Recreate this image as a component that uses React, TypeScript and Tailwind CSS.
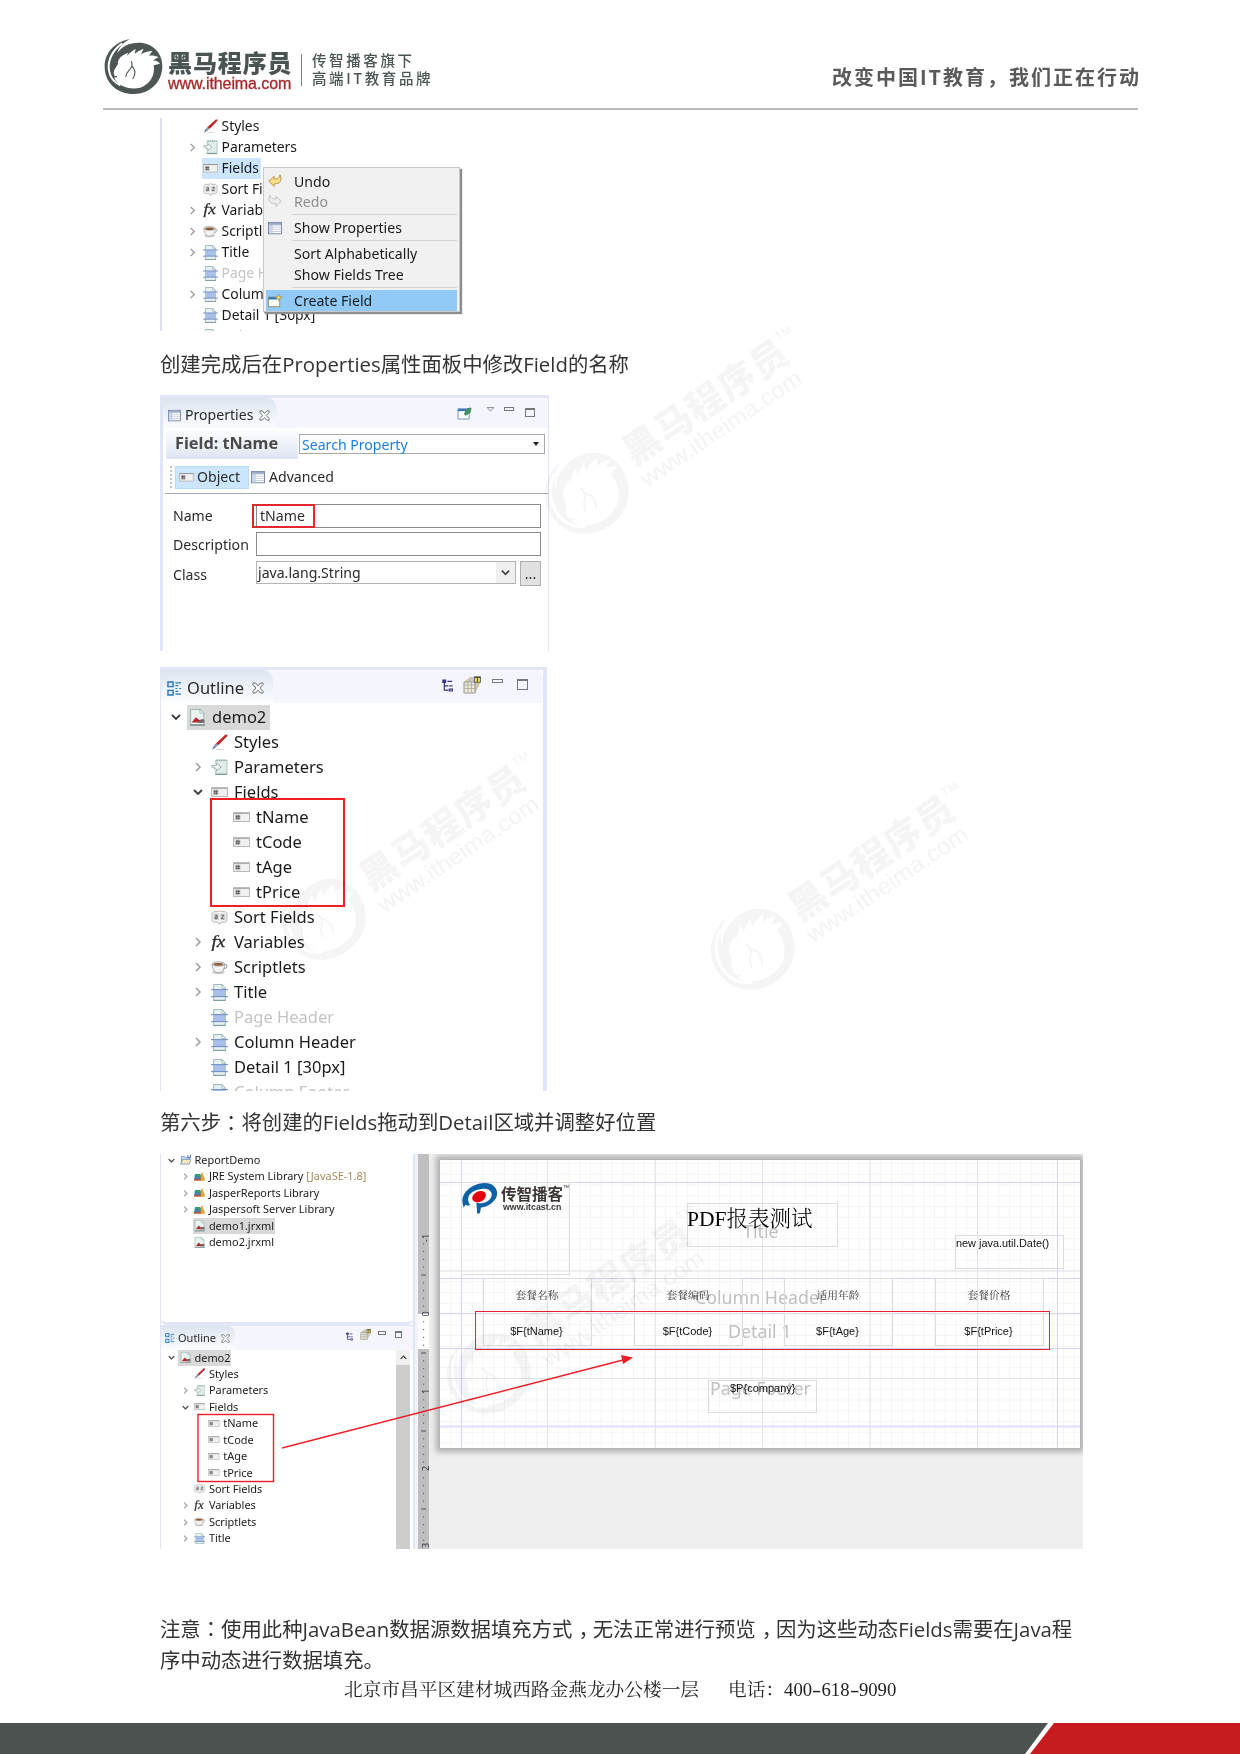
import React from "react";

type IconName =
  | "brush" | "param" | "field" | "sort" | "fx" | "cup" | "band" | "report"
  | "lib" | "folder" | "undo" | "redo" | "table" | "create" | "none";

function Icon({ name, className }: { name: IconName; className: string }) {
  const body: Record<IconName, React.ReactNode> = {
    none: null,
    brush: (
      <>
        <path d="M1 15l2-4.5 2 1.5z" fill="#5b6cae" />
        <path d="M2.4 11.4L5 8.2l2.2 1.8-3.100 3z" fill="#8f97b5" />
        <path d="M4.800 8.600L13.600.400l1.900.2-.3 1.400L7.200 10.400z" fill="#c0282c" />
        <path d="M5 14.500h7" stroke="#d8d8e2" />
      </>
    ),
    param: (
      <>
        <path d="M4.500 1h10.500v13.500H4.500v-4M4.500 5V1" fill="#dfecea" stroke="#a9c2be" strokeWidth=".9" />
        <path d="M5 1.200h9.500" stroke="#6f9b98" strokeDasharray="1.200 1" />
        <path d="M.8 6h4.500V4l4.200 3.600-4.200 3.400V9.400H3.400V7.800H.8z" fill="#f6faf8" stroke="#8fa8a4" strokeWidth=".8" />
        <path d="M4 14.400h11" stroke="#7d9c98" strokeWidth="1.200" />
      </>
    ),
    field: (
      <>
        <rect x=".5" y="3.800" width="15" height="8" fill="#f1f1f1" stroke="#b5b5b5" strokeWidth=".9" />
        <path d="M.5 3.800h15" stroke="#8f8f8f" strokeWidth=".9" />
        <rect x="1.500" y="4.800" width="5.800" height="6" fill="#e2e2e2" />
        <path d="M3.600 5.500v4.600M5.400 5.500v4.600M2.300 6.900h4.400M2.300 8.700h4.400" stroke="#4a4a4a" strokeWidth=".75" />
      </>
    ),
    sort: (
      <>
        <path d="M2.500 2.500h4.200L8 1.400l1.300 1.100h4.200L15 4v7.200l-1.500 1.200h-4L8 14.600l-1.500-2.200h-4L1 11.200V4z" fill="#f2f2f2" stroke="#b4b4b4" strokeWidth=".9" />
        <rect x="2.600" y="4.500" width="4.800" height="5.800" fill="#d4d4d4" />
        <rect x="8.600" y="4.500" width="4.800" height="5.800" fill="#d4d4d4" />
        <path d="M3.800 5.800h2v3.400h-2V7.500h2M9.800 5.800h2.400l-2.400 3.400h2.600" fill="none" stroke="#555" strokeWidth=".8" />
      </>
    ),
    fx: (
      <text x=".5" y="12.200" fontFamily="Liberation Serif, serif" fontStyle="italic" fontSize="16.500" fill="#2b2b2b" stroke="#2b2b2b" strokeWidth=".3" textLength="13" lengthAdjust="spacingAndGlyphs">fx</text>
    ),
    cup: (
      <>
        <ellipse cx="7" cy="12.600" rx="6" ry="1.700" fill="#d0d0d0" />
        <path d="M1 4.500C1 9 3 13 7 13s6-4 6-8.500z" fill="#f3f3f3" stroke="#9c9c9c" strokeWidth=".8" />
        <path d="M12.800 5.500c3-.8 3.400 2.600-1 4" fill="none" stroke="#a5a5a5" />
        <ellipse cx="7" cy="4.700" rx="6" ry="2" fill="#efe9e4" stroke="#a0a0a0" strokeWidth=".8" />
        <ellipse cx="7" cy="5" rx="4.600" ry="1.300" fill="#8a5a35" />
      </>
    ),
    band: (
      <>
        <path d="M2.500.5h8L13.500 4v11.500h-11z" fill="#e6f1f0" stroke="#9ab5b8" strokeWidth=".9" />
        <path d="M10.300.5V4h3.200z" fill="#fff" stroke="#9ab5b8" strokeWidth=".8" />
        <rect x="2.800" y="5.500" width="10.400" height="6.300" fill="#a9c0ec" />
        <path d="M0 5.300h16M0 11.900h16" stroke="#6683bd" strokeWidth=".9" />
        <path d="M2.200 15.400h11.600" stroke="#7f9a9c" />
      </>
    ),
    report: (
      <>
        <path d="M1.500.5h9L14 4v11.500H1.500z" fill="#e9f4f1" stroke="#9bb3b0" strokeWidth=".9" />
        <path d="M10.300.5V4H14z" fill="#fff" stroke="#9bb3b0" strokeWidth=".8" />
        <path d="M2.500 12.800l4-5 3 2.600 2.500-.6 1.500 3z" fill="#b7282b" />
        <path d="M8 13h6.500V10l-2-.6-2 1.300z" fill="#6a6a6a" />
        <path d="M1 15h14" stroke="#7d8f90" strokeWidth="1.400" />
      </>
    ),
    lib: (
      <>
        <path d="M1.500 4h7l1.500 2.500H1z" fill="#2e9e78" />
        <rect x="1" y="6" width="9" height="2.400" fill="#2e8f80" />
        <rect x=".5" y="8.600" width="9.500" height="2.400" fill="#2a6fa8" />
        <rect x="0" y="11.200" width="10.500" height="2.400" fill="#c2542e" />
        <path d="M9.500 13.600V3.500l2-1.500L16 13.600z" fill="#e8a23a" />
      </>
    ),
    folder: (
      <>
        <path d="M2 14V3.500h4.500l1 1.500H13v3" fill="#cfe0f3" stroke="#5d87b8" />
        <path d="M.8 14L3.600 7.500h12L12.800 14z" fill="#f6e7bd" stroke="#5d87b8" />
        <path d="M11 1.500v3.600h3.500V1" fill="none" stroke="#3f6fae" strokeWidth="1.300" />
      </>
    ),
    undo: (
      <path d="M.8 8.200L7 2.800v3c3.600.3 5.800-1 6.800-4.800 2.700 6 .2 10.500-6.800 10.200v3z" fill="#fbe08c" stroke="#b58a3c" strokeWidth="1" />
    ),
    redo: (
      <path d="M15.200 8.200L9 2.800v3C5.400 6.100 3.200 4.800 2.200 1-.5 7 2 11.500 9 11.200v3z" fill="#ececec" stroke="#c0c0c0" strokeWidth="1" />
    ),
    table: (
      <>
        <rect x=".6" y="1.600" width="14.800" height="13" fill="#fff" stroke="#667a9c" strokeWidth="1" />
        <rect x="1" y="2" width="14" height="2.400" fill="#9aabc8" />
        <rect x="1.100" y="4.500" width="3.400" height="9.600" fill="#c9d6ec" />
        <path d="M4.800 4.500v10M5 7h10M5 9.500h10M5 12h10M1 4.600h14" stroke="#a9b5ca" strokeWidth=".7" />
      </>
    ),
    create: (
      <>
        <rect x=".6" y="3.500" width="12.800" height="11" fill="#fdfdf5" stroke="#a08c5a" strokeWidth="1" />
        <rect x=".6" y="3.500" width="10" height="2.800" fill="#3a78c4" />
        <path d="M12.200.2l1.100 2.600L16 4l-2.700 1.200-1.100 2.600-1.100-2.600L8.400 4l2.700-1.200z" fill="#f7d864" stroke="#a98520" strokeWidth=".7" />
      </>
    ),
  };
  return (
    <svg viewBox="0 0 16 16" className={`shrink-0 ${className}`}>
      {body[name]}
    </svg>
  );
}

/** Horse-head ring mark. */
function HorseMark({ color }: { color: string }) {
  return (
    <g>
      <path d="M120 27C75 36 45 68 45 110c0 48 38 82 87 82s86-36 86-84c0-42-32-70-70-70-30 0-52 12-66 32 6-18 18-32 38-43z" fill={color} />
      <path d="M74 134C66 124 82 112 84 100C86 86 94 76 116 68L111 79C120 68 126 64 138 57L135 72C144 64 150 61 162 56L154 73C164 66 174 64 188 63L178 77C188 75 196 77 207 81L190 91C200 92 206 95 211 101L192 106C197 132 184 162 152 173C120 181 84 168 74 144z" fill="#fff" />
      <path d="M98 40C68 60 53 92 58 122c3 18 15 35 34 44" fill="none" stroke="#fff" strokeWidth="6" />
      <path d="M84 100C74 112 64 128 71 140l11 0M125 94c5 12 1 20-7 27-6 6-9 12-10 20M126 108c11 8 14 24 3 39" fill="none" stroke={color} strokeWidth="3.500" />
    </g>
  );
}

function Watermark({ place }: { place: string }) {
  return (
    <svg viewBox="-50 -50 330 110" className={`pointer-events-none absolute h-[110px] w-[330px] origin-[50px_50px] rotate-[-34deg] overflow-visible mix-blend-multiply ${place}`}>
      <g transform="translate(1.500 1.500) scale(.49) translate(-132 -110)">
        <HorseMark color="#f5f5f5" />
      </g>
      <text x="55" y="6" fontFamily="Noto Sans CJK SC, sans-serif" fontWeight="900" fontSize="37" fill="#f5f5f5" textLength="190">黑马程序员</text>
      <text x="54" y="31" fontFamily="Liberation Sans, sans-serif" fontSize="23" fill="#f4f4f4" textLength="189" lengthAdjust="spacingAndGlyphs">www.itheima.com</text>
      <text x="245" y="-17" fontFamily="Liberation Sans, sans-serif" fontSize="12" fill="#f4f4f4">TM</text>
    </svg>
  );
}

const sizes = {
  sm: {
    row: "h-[16.45px] text-[10.950px]", slot: "w-[11px] mr-[3px]", chev: "size-[7px]", icon: "size-[11.500px]", label: "pl-[3.500px]",
    ind: ["pl-[4.500px]", "pl-[18.900px]", "pl-[33.300px]"],
  },
  md: {
    row: "h-[21px] text-[13.900px]", slot: "w-[14px] mr-[3.500px]", chev: "size-[9px]", icon: "size-[15px]", label: "pl-[4px] pr-[2px]",
    ind: ["pl-0", "pl-[23px]", "pl-[40px]"],
  },
  lg: {
    row: "h-[25px] text-[16.500px]", slot: "w-[16px] mr-[5px]", chev: "size-[10px]", icon: "size-[17px]", label: "pl-[6px] pr-[4px]",
    ind: ["pl-[7px]", "pl-[29px]", "pl-[51px]"],
  },
};

type Node = { t: string; i: IconName; l: number; c?: "r" | "d"; muted?: boolean; sel?: string; note?: string };

function Chevron({ dir, className }: { dir: "r" | "d"; className: string }) {
  return (
    <svg viewBox="0 0 10 10" className={className} fill="none" strokeWidth="1.600">
      {dir === "r" ? <path d="M3 1l4 4-4 4" stroke="#a0a0a0" /> : <path d="M1 3l4 4 4-4" stroke="#404040" strokeWidth="1.900" />}
    </svg>
  );
}

function Tree({ nodes, size }: { nodes: Node[]; size: "sm" | "md" | "lg" }) {
  const s = sizes[size];
  return (
    <div className="flex flex-col whitespace-nowrap font-['Noto_Sans'] text-[#1a1a1a]">
      {nodes.map((n) => (
        <div key={n.t} className={`flex shrink-0 items-center ${s.row} ${s.ind[n.l]}`}>
          <div className={`flex shrink-0 justify-center ${s.slot}`}>{n.c && <Chevron dir={n.c} className={s.chev} />}</div>
          <div className={`flex h-full items-center ${n.sel ?? ""}`}>
            <Icon name={n.i} className={s.icon} />
            <span className={`${s.label} ${n.muted ? "text-[#c4c4c4]" : ""}`}>
              {n.t}
              {n.note && <span className="text-[#a08c5c]"> {n.note}</span>}
            </span>
          </div>
        </div>
      ))}
    </div>
  );
}

const menuTree: Node[] = [
  { t: "Styles", i: "brush", l: 1 },
  { t: "Parameters", i: "param", l: 1, c: "r" },
  { t: "Fields", i: "field", l: 1, sel: "bg-[#cce6ff] shadow-[-1px_0_#cce6ff]" },
  { t: "Sort Fields", i: "sort", l: 1 },
  { t: "Variables", i: "fx", l: 1, c: "r" },
  { t: "Scriptlets", i: "cup", l: 1, c: "r" },
  { t: "Title", i: "band", l: 1, c: "r" },
  { t: "Page Header", i: "band", l: 1, muted: true },
  { t: "Column Header", i: "band", l: 1, c: "r" },
  { t: "Detail 1 [30px]", i: "band", l: 1 },
  { t: "Column Footer", i: "band", l: 1, muted: true },
];

const outline: Node[] = [
  { t: "demo2", i: "report", l: 0, c: "d", sel: "bg-[#d9d9d9] shadow-[-2px_0_#d9d9d9]" },
  { t: "Styles", i: "brush", l: 1 },
  { t: "Parameters", i: "param", l: 1, c: "r" },
  { t: "Fields", i: "field", l: 1, c: "d" },
  { t: "tName", i: "field", l: 2 },
  { t: "tCode", i: "field", l: 2 },
  { t: "tAge", i: "field", l: 2 },
  { t: "tPrice", i: "field", l: 2 },
  { t: "Sort Fields", i: "sort", l: 1 },
  { t: "Variables", i: "fx", l: 1, c: "r" },
  { t: "Scriptlets", i: "cup", l: 1, c: "r" },
  { t: "Title", i: "band", l: 1, c: "r" },
  { t: "Page Header", i: "band", l: 1, muted: true },
  { t: "Column Header", i: "band", l: 1, c: "r" },
  { t: "Detail 1 [30px]", i: "band", l: 1 },
  { t: "Column Footer", i: "band", l: 1, muted: true },
];

const project: Node[] = [
  { t: "ReportDemo", i: "folder", l: 0, c: "d" },
  { t: "JRE System Library", i: "lib", l: 1, c: "r", note: "[JavaSE-1.8]" },
  { t: "JasperReports Library", i: "lib", l: 1, c: "r" },
  { t: "Jaspersoft Server Library", i: "lib", l: 1, c: "r" },
  { t: "demo1.jrxml", i: "report", l: 1, sel: "bg-[#d9d9d9] shadow-[-1px_0_#d9d9d9] pr-px" },
  { t: "demo2.jrxml", i: "report", l: 1 },
];

function CloseX({ className }: { className: string }) {
  return (
    <svg viewBox="0 0 12 12" className={className} fill="#fff" stroke="#666" strokeWidth="1">
      <path d="M1 1h2.500L6 3.800 8.500 1H11v1.600L8 6l3 3.400V11H8.500L6 8.200 3.500 11H1V9.400L4 6 1 2.600z" />
    </svg>
  );
}

function OutlineGlyph({ className }: { className: string }) {
  return (
    <svg viewBox="0 0 16 16" className={className} fill="none" stroke="#2f74b5" strokeWidth="1.500">
      <path d="M1 1h5.500v5H1zM1 10h5.500v5H1z" fill="#d4ebfa" />
      <path d="M9 2h6M9 5h3M9 8h2M13 8h2M9 11h3M9 14h6" strokeWidth="1.300" />
    </svg>
  );
}

function TreeGlyph({ className }: { className: string }) {
  return (
    <svg viewBox="0 0 12 14" className={className} fill="none" stroke="#35357a" strokeWidth="1.300">
      <path d="M2.500 3.500V12H7M2.500 7.500H7" />
      <path d="M1 1h3v2.500H1z" fill="#35357a" />
      <path d="M6 2.500h5M8 7.500h3.500M8 11h3.500v2H8z" />
    </svg>
  );
}

function PreviewGlyph({ className }: { className: string }) {
  return (
    <svg viewBox="0 0 18 18" className={className}>
      <path d="M1 6l6-5h10v7l-5 9z" fill="#c9c7b4" />
      <path d="M1 6h11v11H1z" fill="#eceadb" stroke="#98978a" />
      <path d="M1 9h11M1 12.500h11M5 6v11M8.500 6v11" stroke="#aaa99b" strokeWidth=".8" />
      <rect x="11.500" y=".8" width="6" height="5.500" fill="#f1d54a" stroke="#555" strokeWidth=".8" />
      <path d="M11.500 1.400h6M14.500 1v5" stroke="#444" />
    </svg>
  );
}

function MenuItem({ icon, text, cls }: { icon: IconName; text: string; cls?: string }) {
  return (
    <div className={`flex h-[20.300px] items-center ${cls ?? ""}`}>
      <div className="flex w-[28px] pl-[2px]"><Icon name={icon} className="size-[14px]" /></div>
      <span>{text}</span>
    </div>
  );
}

function ContextShot() {
  return (
    <div className="relative h-[213px] w-[330px] overflow-hidden border-l-2 border-[#dcdff0]">
      <div className="-mt-[2.500px]"><Tree nodes={menuTree} size="md" /></div>
      <div className="absolute left-[101px] top-[49px] flex h-[145px] w-[197px] flex-col border border-[#c9c9c9] bg-[#f1f1f1] px-[2px] pt-[3px] font-['Noto_Sans'] text-[14.100px] text-[#1a1a1a] shadow-[2px_2px_1px_#8d8d8d]">
        <MenuItem icon="undo" text="Undo" />
        <MenuItem icon="redo" text="Redo" cls="text-[#8c8c8c]" />
        <div className="my-[2.500px] ml-[26px] h-px bg-[#d4d4d4]" />
        <MenuItem icon="table" text="Show Properties" />
        <div className="my-[2.500px] ml-[26px] h-px bg-[#d4d4d4]" />
        <MenuItem icon="none" text="Sort Alphabetically" />
        <MenuItem icon="none" text="Show Fields Tree" />
        <div className="my-[2.500px] ml-[26px] h-px bg-[#d4d4d4]" />
        <MenuItem icon="create" text="Create Field" cls="bg-[#91c9f7]" />
      </div>
    </div>
  );
}

function PropertiesShot() {
  return (
    <div className="flex h-[256px] w-[389px] flex-col border-l-[3px] border-r border-[#e1e6f7] font-['Noto_Sans'] text-[14.100px] text-[#2a2a2a]">
      <div className="h-[3px] shrink-0 bg-[#e1e6f7]" />
      <div className="flex h-[30px] shrink-0 items-stretch bg-[#f5f6fd]">
        <div className="flex w-[114px] items-center rounded-tr-[10px] bg-linear-to-b from-[#dde5f0] to-[#fbfcff] pl-[5px] pt-[4px]">
          <Icon name="table" className="size-[13px]" />
          <span className="ml-[4px]">Properties</span>
          <CloseX className="ml-[6px] size-[11px]" />
        </div>
        <div className="ml-auto flex items-start pr-[13px] pt-[9px]">
          <svg viewBox="0 0 16 14" className="h-[13px] w-[15px]">
            <path d="M1 2h12v11H1z" fill="#fff" stroke="#6d8bb5" />
            <path d="M1 2h9v2.500H1z" fill="#3a78c4" />
            <path d="M8 7l3-5 4-1-1 5-5 3z" fill="#3c9a62" stroke="#2b6d45" strokeWidth=".8" />
          </svg>
          <svg viewBox="0 0 10 6" className="ml-[14px] h-[5px] w-[9px]" fill="none" stroke="#777"><path d="M1 .5h8L5 5z" /></svg>
          <div className="ml-[9px] h-[4px] w-[10px] border border-[#777]" />
          <div className="ml-[11px] mt-px h-[9px] w-[10px] border border-t-2 border-[#777]" />
        </div>
      </div>
      <div className="flex h-[31px] shrink-0 items-start">
        <div className="ml-[3px] flex h-full w-[132px] items-center bg-linear-to-b from-white to-[#dee5f2] pl-[9px] text-[16.300px] font-bold text-[#4a4a4a]">Field: tName</div>
        <div className="ml-px mt-[6px] flex h-[20px] w-[246px] shrink-0 items-center border border-[#a9a9a9] pl-[2px] pr-[5px] text-[#1b80dc]">
          <span className="pt-[2px]">Search Property</span>
          <span className="ml-auto size-0 border-x-[3px] border-t-[4px] border-x-transparent border-t-[#222]" />
        </div>
      </div>
      <div className="ml-[2px] flex h-[35px] shrink-0 items-center border-b border-[#a8a8a8] pl-[5px] pt-[2px]">
        <div className="h-[22px] border-l-2 border-dotted border-[#c4c4c4]" />
        <div className="ml-[3px] flex h-[23px] w-[74px] items-center border border-[#b9dcf6] bg-[#cce6ff] pl-[3px]">
          <Icon name="field" className="size-[15px]" /><span className="ml-[3px]">Object</span>
        </div>
        <Icon name="table" className="ml-[2px] size-[14px]" />
        <span className="ml-[4px]">Advanced</span>
      </div>
      <div className="flex flex-col pl-[10px] pt-[10px]">
        <div className="flex h-[28px] items-start">
          <span className="w-[83px] pt-px">Name</span>
          <div className="relative flex h-[24px] w-[285px] items-center border border-[#8a8a8a] pl-[3px]">
            tName
            <div className="absolute -left-[5px] -top-[1px] h-[24px] w-[63px] border-2 border-[#e3282d]" />
          </div>
        </div>
        <div className="flex h-[29px] items-start">
          <span className="w-[83px] pt-[2px]">Description</span>
          <div className="h-[24px] w-[285px] border border-[#8a8a8a]" />
        </div>
        <div className="flex h-[26px] items-start">
          <span className="w-[83px] pt-[3px]">Class</span>
          <div className="flex h-[23px] w-[260px] items-center border border-[#b4b4b4] pl-[1px]">
            java.lang.String
            <div className="ml-auto flex h-full w-[19px] items-center justify-center bg-[#f0f0f0]"><Chevron dir="d" className="size-[9px]" /></div>
          </div>
          <div className="ml-[4px] flex h-[25px] w-[21px] items-center justify-center border border-[#adadad] bg-[#e1e1e1]">...</div>
        </div>
      </div>
    </div>
  );
}

function OutlineShot() {
  return (
    <div className="relative flex h-[424px] w-[387px] flex-col overflow-hidden border-l border-r-4 border-t-[3px] border-[#e1e6f7]">
      <div className="flex h-[33px] shrink-0 items-stretch rounded-tr-[8px] bg-[#f5f6fd] font-['Noto_Sans'] text-[16.500px] text-[#2a2a2a]">
        <div className="flex w-[112px] items-center rounded-tr-[10px] bg-linear-to-b from-[#dde5f0] to-[#fbfcff] pl-[6px] pt-[3px]">
          <OutlineGlyph className="size-[15px]" />
          <span className="ml-[5px]">Outline</span>
          <CloseX className="ml-[8px] size-[12px]" />
        </div>
        <div className="ml-auto flex items-start pr-[15px]">
          <TreeGlyph className="mt-[9px] h-[13px] w-[11px]" />
          <PreviewGlyph className="ml-[10px] mt-[6px] size-[18px]" />
          <div className="ml-[11px] mt-[9px] h-[4px] w-[11px] border border-[#777]" />
          <div className="ml-[14px] mt-[9px] h-[11px] w-[11px] border border-t-2 border-[#777]" />
        </div>
      </div>
      <div className="pt-[1.500px]"><Tree nodes={outline} size="lg" /></div>
      <div className="absolute left-[49px] top-[128px] h-[109px] w-[135px] border-2 border-[#ec1f27]" />
    </div>
  );
}

const majorX = [107.5, 215.3, 322.5, 430, 537.5];
const minorX = Array.from({ length: 59 }, (_, i) => (i + 1) * 10.75);
const minorY = Array.from({ length: 27 }, (_, i) => 3.5 + i * 10.75);

/** Outlined report element placed on the design canvas. */
function El({ at, children }: { at: string; children?: React.ReactNode }) {
  return <div className={`absolute border border-[#dcdce0] ${at}`}>{children}</div>;
}

function ReportCanvas() {
  const cols = [
    ["left-[43px]", "套餐名称", "$F{tName}"],
    ["left-[194px]", "套餐编码", "$F{tCode}"],
    ["left-[344px]", "适用年龄", "$F{tAge}"],
    ["left-[495px]", "套餐价格", "$F{tPrice}"],
  ];
  return (
    <div className="relative h-[288px] w-[640px] shrink-0 bg-white font-['Liberation_Sans'] text-[11px] leading-none text-[#111] shadow-[0_0_6px_4px_#adadad]">
      <svg viewBox="0 0 640 288" className="absolute inset-0 h-full w-full">
        <g stroke="#f5f5f5">
          {minorX.map((x) => <path key={x} d={`M${x} 0V288`} />)}
          {minorY.map((y) => <path key={y} d={`M0 ${y}H640`} />)}
        </g>
        <g stroke="#e3e3e7">
          {majorX.map((x) => <path key={x} d={`M${x} 0V288`} />)}
          <path d="M0 111H640M0 218.500H640" />
        </g>
        <g stroke="#d2d2fa">
          <path d="M21.500 0V288M617.500 0V288M0 22.500H640M0 118.500H640M0 153.500H640M0 188.500H640" />
          <path d="M0 266.500H640" stroke="#e0e0fc" strokeWidth="2" />
        </g>
      </svg>
      <El at="left-[21px] top-[22px] h-[93px] w-[109px]" />
      <svg viewBox="0 0 42 34" className="absolute left-[21px] top-[22px] h-[33px] w-[38px]">
        <path d="M3 27C-3 13 10 1 26 0c14 0 17 12 11 19-5 6-12 8-15 8l-1 6-3 1-1-12c10 1 16-3 17-9 0-6-7-8-14-6C9 9 5 17 10 24l-2 1-3-1z" fill="#0d62a6" />
        <ellipse cx="20" cy="15" rx="8" ry="5.800" transform="rotate(-28 20 15)" fill="#e5000f" />
      </svg>
      <div className="absolute left-[61px] top-[25px] flex flex-col whitespace-nowrap text-[#3b3534]">
        <span className="font-['Noto_Sans_CJK_SC'] text-[15.500px] font-bold leading-[16px]">传智播客</span>
        <span className="pl-[2px] pt-[2px] text-[8.800px] font-bold">www.itcast.cn</span>
      </div>
      <span className="absolute left-[123px] top-[25px] text-[4px]">TM</span>

      <El at="left-[247px] top-[43px] h-[44px] w-[151px]" />
      <El at="left-[515px] top-[75px] h-[34px] w-[109px]" />
      <span className="absolute left-[516px] top-[78px] whitespace-nowrap text-[10.900px]">new java.util.Date()</span>
      <div className="font-['Noto_Sans'] text-[17.800px] leading-[20px] text-[#c0c0c0]">
        <span className="absolute left-[303px] top-[61px]">Title</span>
        <span className="absolute left-[255px] top-[127px] whitespace-nowrap">Column Header</span>
        <span className="absolute left-[288px] top-[161px] whitespace-nowrap">Detail 1</span>
        <span className="absolute left-[270px] top-[218px] whitespace-nowrap">Page Footer</span>
      </div>
      <span className="absolute left-[247px] top-[46px] whitespace-nowrap font-['Liberation_Serif','Noto_Serif_CJK_SC','Noto_Sans_CJK_SC',serif] text-[21.500px] font-light leading-[26px] text-black">PDF报表测试</span>
      {cols.map(([left, head, detail]) => (
        <div key={head} className={`absolute top-[118px] flex w-[109px] flex-col gap-[1px] ${left}`}>
          <div className="flex h-[34px] items-center justify-center border border-[#dcdce0] pr-px font-['Noto_Serif_CJK_SC','Noto_Sans_CJK_SC',serif] text-[10.700px] text-[#333]">{head}</div>
          <div className="flex h-[33px] items-center justify-center border border-[#dcdce0] pr-[2px] pt-[4px]">{detail}</div>
        </div>
      ))}
      <El at="left-[268px] top-[220px] h-[33px] w-[109px]" />
      <span className="absolute left-[290px] top-[223px]">$P{"{company}"}</span>
      <div className="absolute left-[35px] top-[151px] h-[39px] w-[575px] border-[1.500px] border-[#ea222b]" />
    </div>
  );
}

function Ruler() {
  const ticks = Array.from({ length: 51 }, (_, i) => i);
  return (
    <div className="relative flex w-[11px] shrink-0 flex-col bg-[#bfbfbf]">
      <div className="mt-[159.500px] h-[35px] bg-white" />
      <svg viewBox="0 0 11 395" className="absolute inset-0 h-full w-full overflow-hidden">
        {ticks.map((i) => {
          const up = 159.5 - i * 7.8;
          const down = 159.5 + i * 7.8;
          const long = i % 10 === 5;
          return (
            <g key={i} fill="#555">
              {i % 10 !== 0 && up > 88 && <rect x={long ? 3 : 5} y={up} width={long ? 5 : 1.2} height="1" />}
              {i > 0 && i < 30 && i % 10 !== 0 && <rect x={long ? 3 : 5} y={down} width={long ? 5 : 1.2} height="1" />}
            </g>
          );
        })}
        <g fontFamily="Noto Sans, sans-serif" fontSize="9" fill="#334">
          <text transform="translate(11 88) rotate(-90)">-1</text>
          <text transform="translate(11 162.500) rotate(-90)">0</text>
          <text transform="translate(11 240) rotate(-90)">1</text>
          <text transform="translate(11 317) rotate(-90)">2</text>
          <text transform="translate(11 394) rotate(-90)">3</text>
        </g>
      </svg>
    </div>
  );
}

function StudioShot() {
  return (
    <div className="relative flex h-[395px] w-[923px] overflow-hidden">
      <div className="flex w-[253px] shrink-0 flex-col border-l border-[#e1e6f7]">
        <div className="h-[171px] shrink-0 rounded-b-[6px] border-b-[3px] border-[#e1e6f7]">
          <div className="-mt-[2px]"><Tree nodes={project} size="sm" /></div>
        </div>
        <div className="flex h-[24.500px] shrink-0 items-stretch border-t border-[#e1e6f7] bg-[#f5f6fd] font-['Noto_Sans'] text-[11px] text-[#2a2a2a]">
          <div className="flex w-[74px] items-center rounded-tr-[8px] bg-linear-to-b from-[#dde5f0] to-[#fbfcff] pl-[4px] pt-px">
            <OutlineGlyph className="size-[10px]" />
            <span className="ml-[3px]">Outline</span>
            <CloseX className="ml-[5px] size-[9px]" />
          </div>
          <div className="ml-auto flex items-start pr-[11px] pt-[3px]">
            <TreeGlyph className="mt-[3px] h-[9px] w-[7px]" />
            <PreviewGlyph className="ml-[7px] size-[11px]" />
            <div className="ml-[7px] mt-[2px] h-[4px] w-[8px] border border-[#777]" />
            <div className="ml-[9px] mt-[2px] size-[7px] border border-t-2 border-[#777]" />
          </div>
        </div>
        <div className="flex min-h-0 flex-1">
          <div className="flex-1"><Tree nodes={outline.slice(0, 12)} size="sm" /></div>
          <div className="mr-[3px] flex w-[14px] flex-col bg-[#cdcdcd]">
            <div className="flex h-[15px] items-center justify-center bg-[#f0f0f0]"><Chevron dir="d" className="size-[7px] rotate-180" /></div>
          </div>
        </div>
      </div>
      <div className="w-[2px] bg-[#e1e6f7]" />
      <div className="w-[3px] bg-[#f2f3fa]" />
      <Ruler />
      <div className="flex-1 bg-[#efefef] pl-[11px] pt-[6px]">
        <ReportCanvas />
      </div>
      <svg viewBox="0 0 923 395" className="pointer-events-none absolute inset-0 h-full w-full" fill="none" stroke="#ec1f27" strokeWidth="1.400">
        <rect x="38" y="260.500" width="75.500" height="67" />
        <path d="M122 294L463 206" />
        <path d="M473 203.500l-12-2.500 2.200 9z" fill="#ec1f27" stroke="none" />
      </svg>
    </div>
  );
}

/** Full-width colon and comma set in the middle of their cell. */
function Colon() {
  return <span className="font-['Noto_Sans_CJK_JP']">：</span>;
}
function Comma() {
  return <span className="-mr-[6px] ml-[6px]">，</span>;
}
function Dash() {
  return <span className="inline-block w-[9.350px] scale-x-150 text-center">-</span>;
}

export default function App() {
  return (
    <div className="relative flex h-[1754px] w-[1240px] flex-col overflow-hidden bg-white">
      <header className="mx-[103px] flex h-[110px] w-[1035px] shrink-0 items-start border-b-2 border-[#bcbcbc] font-['Noto_Sans_CJK_SC'] text-[#4a5453]">
        <svg viewBox="40 24 180 170" className="mt-[38px] h-[56.700px] w-[60px]">
          <HorseMark color="#4e5655" />
        </svg>
        <div className="ml-[5px] mt-[49px] flex w-[124px] flex-col whitespace-nowrap">
          <span className="text-[24px] font-black leading-[26px] tracking-[0.900px]">黑马程序员</span>
          <span className="font-['Liberation_Sans'] text-[16px] leading-[18px] tracking-[-0.080px] text-[#a8262a] [-webkit-text-stroke:0.300px_#a8262a]">www.itheima.com</span>
        </div>
        <div className="ml-[9px] mt-[54px] h-[32px] w-px bg-[#7c8483]" />
        <div className="ml-[10px] mt-[50.500px] flex flex-col whitespace-nowrap text-[14.500px] font-medium leading-[18px] tracking-[2.600px]">
          <span>传智播客旗下</span>
          <span>高端IT教育品牌</span>
        </div>
        <div className="-mr-[3px] ml-auto mt-[63px] whitespace-nowrap text-[20px] font-bold leading-[28px] tracking-[2px] text-[#5a5a5a]">改变中国IT教育，我们正在行动</div>
      </header>

      <main className="flex flex-col pl-[160px] pt-[8px] font-['Open_Sans','Noto_Sans_CJK_SC',sans-serif] text-[20.370px] text-[#333]">
        <ContextShot />
        <p className="flex h-[64px] items-center whitespace-nowrap pt-[2px]">创建完成后在Properties属性面板中修改Field的名称</p>
        <PropertiesShot />
        <div className="h-[16px]" />
        <OutlineShot />
        <p className="flex h-[63px] items-center whitespace-nowrap">第六步<Colon />将创建的Fields拖动到Detail区域并调整好位置</p>
        <StudioShot />
        <p className="mt-[64px] whitespace-nowrap leading-[31px]">
          注意<Colon />使用此种JavaBean数据源数据填充方式<Comma />无法正常进行预览<Comma />因为这些动态Fields需要在Java程
          <br />
          序中动态进行数据填充。
        </p>
      </main>

      <div className="flex gap-[29px] whitespace-nowrap pl-[344px] pt-px font-['Liberation_Serif','Noto_Serif_CJK_SC','Noto_Sans_CJK_SC',serif] text-[18.700px] leading-[26px] text-[#222]">
        <span>北京市昌平区建材城西路金燕龙办公楼一层</span>
        <span>电话：400<Dash />618<Dash />9090</span>
      </div>
      <footer className="mt-auto flex h-[31px] shrink-0 bg-white">
        <div className="w-[1048px] bg-[#4b5250] [clip-path:polygon(0_0,100%_0,1025px_100%,0_100%)]" />
        <div className="-ml-[18px] flex-1 bg-[#c81b1f] [clip-path:polygon(24px_0,100%_0,100%_100%,0_100%)]" />
      </footer>

      <Watermark place="left-[535px] top-[442px]" />
      <Watermark place="left-[701px] top-[898px]" />
      <Watermark place="left-[272px] top-[868px]" />
      <Watermark place="left-[437px] top-[1322px]" />
    </div>
  );
}
